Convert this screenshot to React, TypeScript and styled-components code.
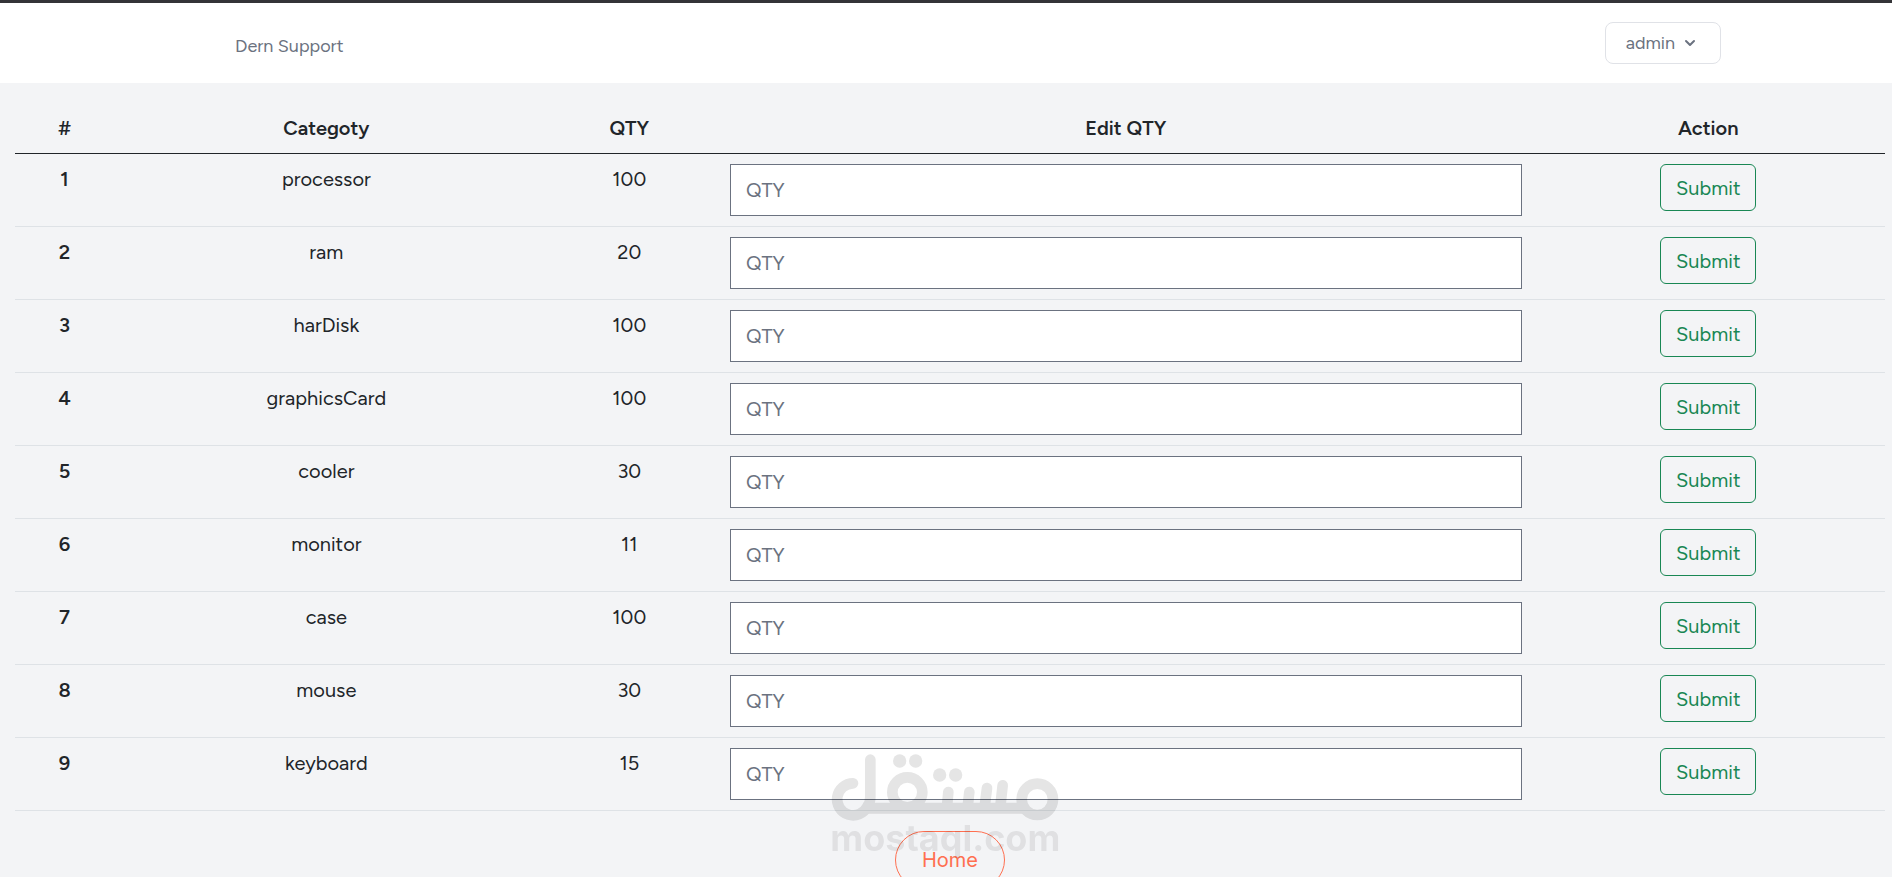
import React from 'react';
import styled, { createGlobalStyle } from 'styled-components';

const GlobalStyle = createGlobalStyle`
  *, *::before, *::after { box-sizing: border-box; }
  html { scrollbar-width: none; }
  body {
    margin: 0;
    background: #f3f4f6;
    color: #212529;
    font-family: Figtree, Lato, sans-serif;
    font-size: 20px;
    line-height: 30px;
  }
  button, input { font: inherit; }
`;

const Header = styled.header`
  border-top: 3px solid #343438;
  background: #fff;
`;

const Nav = styled.nav`
  display: flex;
  align-items: center;
  justify-content: space-between;
  max-width: 1550px;
  height: 80px;
  margin: 0 auto;
`;

const Brand = styled.a`
  margin-left: 64px;
  padding-top: 6px;
  color: #6b7280;
  font-size: 18px;
  line-height: 24px;
  text-decoration: none;
`;

const UserButton = styled.button`
  display: flex;
  align-items: center;
  gap: 5px;
  height: 42px;
  padding: 0 20px;
  border: 1px solid #e0e2e7;
  border-radius: 8px;
  background: #fff;
  color: #6b7280;
  font-size: 18px;
  line-height: 24px;
`;

const Main = styled.main`
  display: flex;
  flex-direction: column;
  align-items: center;
  gap: 20px;
  padding: 20px 7px 20px 15px;
`;

const StockTable = styled.table`
  width: 100%;
  table-layout: fixed;
  border-collapse: separate;
  border-spacing: 0;
  text-align: center;
`;

const Column = styled.col<{ $share: number }>`
  width: ${(p) => p.$share}%;
`;

const HeadCell = styled.th`
  padding: 10px;
  border-bottom: 1px solid #212529;
  font-weight: 600;
`;

const RowNumber = styled.th`
  padding: 10px;
  border-bottom: 1px solid #dee2e6;
  font-weight: 600;
  vertical-align: top;
`;

const Cell = styled.td`
  padding: 10px;
  border-bottom: 1px solid #dee2e6;
  vertical-align: top;
`;

const QtyInput = styled.input`
  display: block;
  width: 100%;
  height: 52px;
  padding: 10px 15px;
  border: 1px solid #6b7280;
  border-radius: 0;
  background: #fff;
  color: #212529;
  &::placeholder { color: #6b7280; opacity: 1; }
`;

const SubmitButton = styled.button`
  display: block;
  width: 96px;
  height: 47px;
  margin: 0 auto;
  padding: 0;
  border: 1px solid #198754;
  border-radius: 6px;
  background: transparent;
  color: #198754;
`;

const HomeLink = styled.a`
  padding: 13px 26px;
  border: 1px solid #ff6f50;
  border-radius: 30px;
  color: #ff6f50;
  font-family: Inter, sans-serif;
  text-decoration: none;
`;

const Watermark = styled.svg`
  position: fixed;
  bottom: 15px;
  left: 50%;
  width: 230px;
  height: 110px;
  transform: translateX(-50%);
  overflow: visible;
  pointer-events: none;
`;

const columns = [
  { title: '#', share: 5.3 },
  { title: 'Categoty', share: 22.7 },
  { title: 'QTY', share: 9.7 },
  { title: 'Edit QTY', share: 43.4 },
  { title: 'Action', share: 18.9 },
];

const items = [
  { name: 'processor', qty: 100 },
  { name: 'ram', qty: 20 },
  { name: 'harDisk', qty: 100 },
  { name: 'graphicsCard', qty: 100 },
  { name: 'cooler', qty: 30 },
  { name: 'monitor', qty: 11 },
  { name: 'case', qty: 100 },
  { name: 'mouse', qty: 30 },
  { name: 'keyboard', qty: 15 },
];

const Chevron = () => (
  <svg width="20" height="20" viewBox="0 0 20 20" fill="currentColor" aria-hidden="true">
    <path
      fillRule="evenodd"
      clipRule="evenodd"
      d="M5.293 7.293a1 1 0 011.414 0L10 10.586l3.293-3.293a1 1 0 111.414 1.414l-4 4a1 1 0 01-1.414 0l-4-4a1 1 0 010-1.414z"
    />
  </svg>
);

const MostaqlMark = () => (
  <Watermark viewBox="153 66 690 330" role="img" aria-label="mostaql.com">
    <g opacity="0.1">
      <g fill="none" stroke="#000" strokeWidth="32" strokeLinecap="round">
        <path d="M219 160A48 48 0 1 0 262 230Q271 218 271 200V89" />
        <path d="M250 235H735" strokeLinecap="butt" strokeWidth="33" />
        <circle cx="382" cy="187" r="45" />
        <path d="M505 186L501 230M568 186L563 230M621 174L614 230M668 166L661 230" />
        <circle cx="772" cy="208" r="47" />
      </g>
      <circle cx="359" cy="93" r="20" />
      <circle cx="407" cy="93" r="20" />
      <circle cx="479" cy="135" r="20" />
      <circle cx="527" cy="135" r="20" />
    </g>
    <text
      x="496"
      y="364"
      opacity="0.08"
      textAnchor="middle"
      fontFamily="Inter, sans-serif"
      fontWeight="700"
      fontSize="108"
    >
      mostaql.com
    </text>
  </Watermark>
);

export default function App() {
  return (
    <>
      <GlobalStyle />
      <Header>
        <Nav>
          <Brand href="#">Dern Support</Brand>
          <UserButton type="button" aria-haspopup="menu">
            admin
            <Chevron />
          </UserButton>
        </Nav>
      </Header>
      <Main>
        <StockTable>
          <colgroup>
            {columns.map((c) => (
              <Column key={c.title} $share={c.share} />
            ))}
          </colgroup>
          <thead>
            <tr>
              {columns.map((c) => (
                <HeadCell key={c.title} scope="col">{c.title}</HeadCell>
              ))}
            </tr>
          </thead>
          <tbody>
            {items.map((item, i) => (
              <tr key={item.name}>
                <RowNumber scope="row">{i + 1}</RowNumber>
                <Cell>{item.name}</Cell>
                <Cell>{item.qty}</Cell>
                <Cell>
                  <QtyInput type="text" placeholder="QTY" aria-label={`New quantity for ${item.name}`} />
                </Cell>
                <Cell>
                  <SubmitButton type="submit">Submit</SubmitButton>
                </Cell>
              </tr>
            ))}
          </tbody>
        </StockTable>
        <HomeLink href="#">Home</HomeLink>
      </Main>
      <MostaqlMark />
    </>
  );
}
